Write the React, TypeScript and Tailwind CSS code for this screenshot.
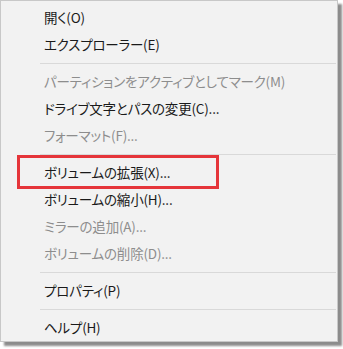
import React from 'react';

type Entry = { label: string; disabled?: boolean } | 'sep';

const entries: Entry[] = [
  { label: '開く(O)' },
  { label: 'エクスプローラー(E)' },
  'sep',
  { label: 'パーティションをアクティブとしてマーク(M)', disabled: true },
  { label: 'ドライブ文字とパスの変更(C)...' },
  { label: 'フォーマット(F)...', disabled: true },
  'sep',
  { label: 'ボリュームの拡張(X)...' },
  { label: 'ボリュームの縮小(H)...' },
  { label: 'ミラーの追加(A)...', disabled: true },
  { label: 'ボリュームの削除(D)...', disabled: true },
  'sep',
  { label: 'プロパティ(P)' },
  'sep',
  { label: 'ヘルプ(H)' },
];

export default function App() {
  return (
    <div className="w-[343px] h-[349px] bg-white overflow-hidden">
      <div
        className="relative w-[338px] h-[342px] bg-[#f2f2f2] border border-[#c8c8c8] shadow-[4px_4px_2px_rgba(0,0,0,0.45)] pt-[3px] flex flex-col"
        style={{ fontFamily: '"Noto Sans CJK JP", "Noto Sans", sans-serif' }}
      >
        {entries.map((e, i) =>
          e === 'sep' ? (
            <div key={i} className="h-[10px] shrink-0 flex items-center pl-[39px] pr-[1px]">
              <div className="h-px w-full bg-[#d9d9d9]" />
            </div>
          ) : (
            <div
              key={i}
              className={`h-[27px] shrink-0 flex items-center pl-[43px] text-[13.5px] tracking-[-0.2px] [font-feature-settings:'palt'] ${
                e.disabled ? 'text-[#8d8d8d]' : 'text-[#1a1a1a]'
              }`}
            >
              {e.label}
            </div>
          )
        )}
        {/* highlight frame */}
        <div className="absolute left-[16px] top-[154px] w-[202px] h-[34px] border-[3px] border-[#e5353a]" />
      </div>
    </div>
  );
}
